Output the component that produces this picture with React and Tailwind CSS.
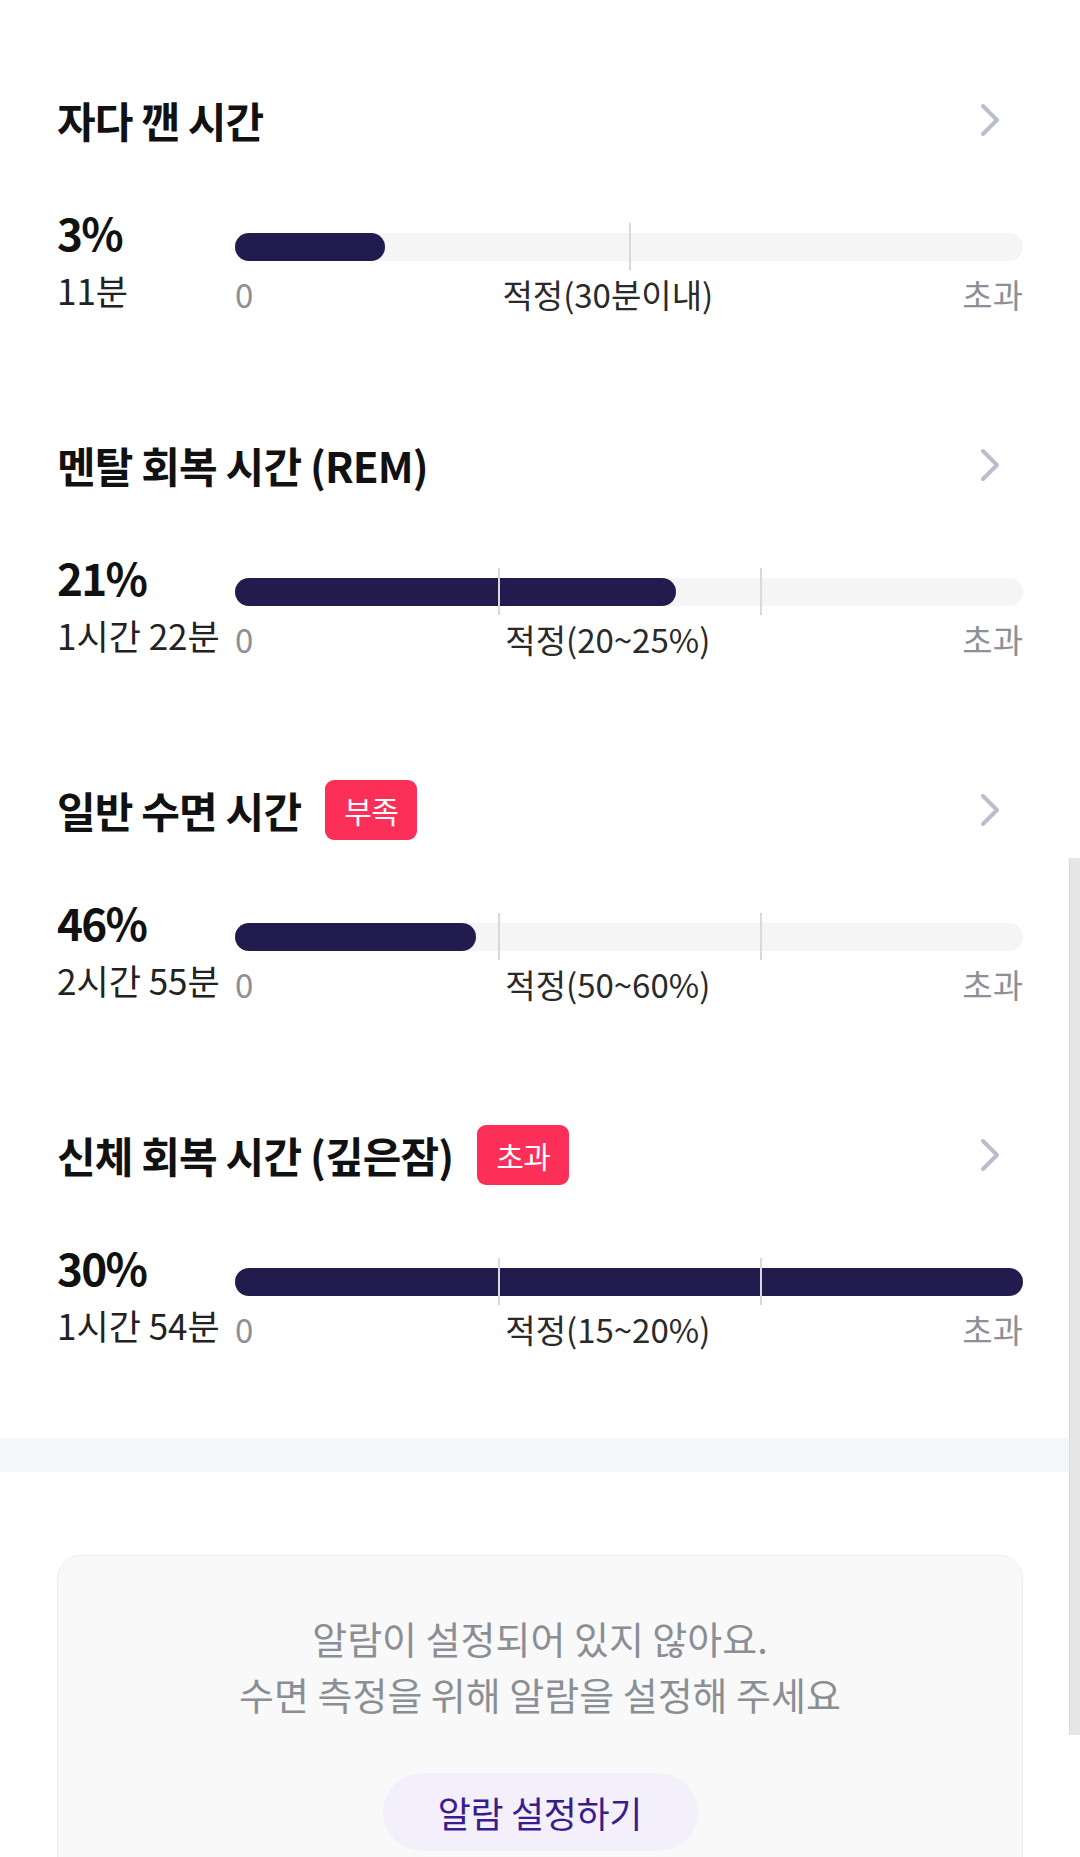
import React from "react";

const sections = [
    { title: "자다 깬 시간", badge: null, percent: "3%", duration: "11분", fill: 19, ticks: [50], range: "적정(30분이내)" },
    { title: "멘탈 회복 시간 (REM)", badge: null, percent: "21%", duration: "1시간 22분", fill: 56, ticks: [33.33, 66.67], range: "적정(20~25%)" },
    { title: "일반 수면 시간", badge: "부족", percent: "46%", duration: "2시간 55분", fill: 30.6, ticks: [33.33, 66.67], range: "적정(50~60%)" },
    { title: "신체 회복 시간 (깊은잠)", badge: "초과", percent: "30%", duration: "1시간 54분", fill: 100, ticks: [33.33, 66.67], range: "적정(15~20%)" },
];

const Chevron = () => (
    <svg width="20" height="34" viewBox="0 0 20 34" fill="none" className="mr-[23px]">
        <polyline points="3,3 17,17 3,31" stroke="#b9bdcc" strokeWidth="4" strokeLinecap="round" strokeLinejoin="round" />
    </svg>
);

const SleepSection = ({ item }) => {
    return (
        <div className="flex flex-col">
            {/* Header */}
            <div className="flex items-center justify-between h-[60px]">
                <div className="flex items-center gap-[24px]">
                    <h2 className="text-[42px] leading-[60px] font-bold tracking-[-0.02em] text-[#111111]">{item.title}</h2>
                    {item.badge && (
                        <span className="bg-[#fb2f57] text-white text-[30px] leading-[60px] h-[60px] px-[19px] rounded-[9px] tracking-[-0.02em]">
                            {item.badge}
                        </span>
                    )}
                </div>
                <Chevron />
            </div>

            {/* Data row */}
            <div className="flex mt-[58px]">
                <div className="w-[178px] shrink-0 flex flex-col">
                    <span className="text-[44px] leading-[48px] font-bold tracking-[-0.04em] text-[#111111]">{item.percent}</span>
                    <span className="mt-[14px] text-[35px] leading-[40px] text-[#222222] whitespace-nowrap">{item.duration}</span>
                </div>
                <div className="flex-1 flex flex-col">
                    <div className="relative mt-[25px] h-[28px] rounded-full bg-[#f5f5f5]">
                        <div className="absolute left-0 top-0 h-full rounded-full bg-[#221c4e]" style={{ width: `${item.fill}%` }} />
                        {item.ticks.map((t) => (
                            <div key={t} className="absolute top-[-10px] bottom-[-9px] w-[2px] bg-[#d9d9d9]" style={{ left: `${t}%` }} />
                        ))}
                    </div>
                    <div className="flex justify-between mt-[13px] text-[33px] leading-[40px]">
                        <span className="text-[#8e9095]">0</span>
                        <span className="text-[#2a2a2a]">{item.range}</span>
                        <span className="text-[#8e9095]">초과</span>
                    </div>
                </div>
            </div>
        </div>
    );
};

export default function App() {
    return (
        <div
            className="relative w-[1080px] h-[1857px] overflow-hidden bg-white"
            style={{ fontFamily: '"Noto Sans CJK KR", "Noto Sans", sans-serif' }}
        >
            <div className="px-[57px] pt-[90px] flex flex-col gap-[121px]">
                {sections.map((s) => (
                    <SleepSection key={s.title} item={s} />
                ))}
            </div>

            {/* Divider band */}
            <div className="mt-[89px] h-[34px] bg-[#f5f6f8]" />

            {/* Alarm card */}
            <div className="mx-[57px] mt-[83px] border border-[#eeeeee] bg-[#f9f9f9] rounded-[24px] pt-[54px] pb-[80px] flex flex-col items-center">
                <p className="text-[38px] leading-[56px] text-[#8b8e94] text-center">
                    알람이 설정되어 있지 않아요.
                    <br />
                    수면 측정을 위해 알람을 설정해 주세요
                </p>
                <button className="mt-[51px] w-[315px] h-[78px] rounded-full bg-[#f3effb] text-[36px] tracking-[-0.01em] text-[#3b1c8c]">
                    알람 설정하기
                </button>
            </div>

            {/* Scrollbar thumb overlay */}
            <div className="absolute right-0 top-[858px] w-[11px] h-[877px] bg-[#e6e6e6] border-l border-[#dadada]" />
        </div>
    );
}
